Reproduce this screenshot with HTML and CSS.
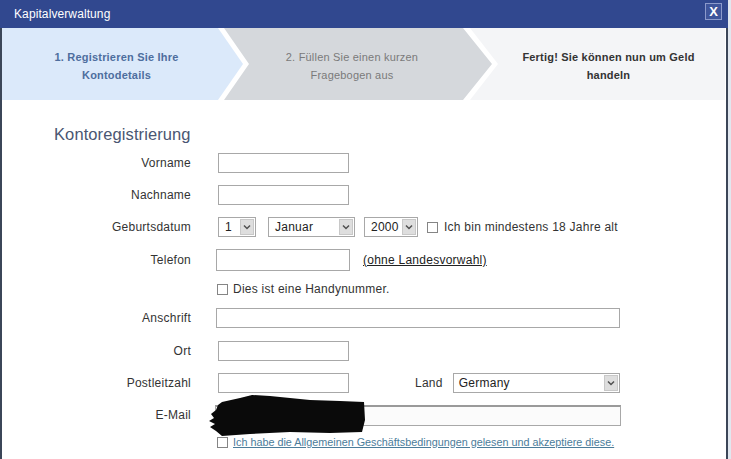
FILE: index.html
```html
<!DOCTYPE html>
<html>
<head>
  <title>Kapitalverwaltung</title>
  <link rel="stylesheet" href="styles.css">
</head>
<body>
  <div class="dialog">
    <div class="titlebar">
      <span class="title">Kapitalverwaltung</span>
      <span class="close">X</span>
    </div>

    <div class="panel">
      <div class="steps">
        <div class="step step-active">1. Registrieren Sie Ihre<br>Kontodetails</div>
        <div class="step step-next">2. Füllen Sie einen kurzen<br>Fragebogen aus</div>
        <div class="step step-done">Fertig! Sie können nun um Geld<br>handeln</div>
      </div>

      <form class="form">
        <h2>Kontoregistrierung</h2>

        <div class="row">
          <label>Vorname</label>
          <input class="field" type="text">
        </div>

        <div class="row">
          <label>Nachname</label>
          <input class="field" type="text">
        </div>

        <div class="row">
          <label>Geburtsdatum</label>
          <div class="select select-day"><span>1</span><i class="arrow"><svg width="8" height="6" viewBox="0 0 8 6"><path d="M1 1.5 L4 4.5 L7 1.5" fill="none" stroke="#505050" stroke-width="1.5"/></svg></i></div>
          <div class="select select-month"><span>Januar</span><i class="arrow"><svg width="8" height="6" viewBox="0 0 8 6"><path d="M1 1.5 L4 4.5 L7 1.5" fill="none" stroke="#505050" stroke-width="1.5"/></svg></i></div>
          <div class="select select-year"><span>2000</span><i class="arrow"><svg width="8" height="6" viewBox="0 0 8 6"><path d="M1 1.5 L4 4.5 L7 1.5" fill="none" stroke="#505050" stroke-width="1.5"/></svg></i></div>
          <span class="box box-age"></span>
          <span class="check-text">Ich bin mindestens 18 Jahre alt</span>
        </div>

        <div class="row row-tel">
          <label class="tight">Telefon</label>
          <input class="field field-tel" type="text">
          <a class="hint" href="#">(ohne Landesvorwahl)</a>
        </div>

        <div class="row row-check">
          <span class="box"></span>
          <span class="check-text">Dies ist eine Handynummer.</span>
        </div>

        <div class="row row-address">
          <label class="tight">Anschrift</label>
          <input class="field field-wide" type="text">
        </div>

        <div class="row">
          <label>Ort</label>
          <input class="field" type="text">
        </div>

        <div class="row">
          <label>Postleitzahl</label>
          <input class="field" type="text">
          <span class="land">Land</span>
          <div class="select select-country"><span>Germany</span><i class="arrow"><svg width="8" height="6" viewBox="0 0 8 6"><path d="M1 1.5 L4 4.5 L7 1.5" fill="none" stroke="#505050" stroke-width="1.5"/></svg></i></div>
        </div>

        <div class="row row-mail">
          <label class="tighter">E-Mail</label>
          <input class="field field-mail" type="text">
          <svg class="redact" width="160" height="44" viewBox="0 0 160 44">
            <path d="M14 8 L32 4 L44 1 L62 2 L82 4 L102 6 L132 7 L156 8 L157 26 L154 38 L122 39 L82 38 L42 40 L14 42 L8 37 L2 33 L7 30 L1 27 L6 24 L3 20 L8 16 L10 11 Z" fill="#0a0a0a"/>
          </svg>
        </div>

        <div class="row row-terms">
          <span class="box"></span>
          <a class="terms" href="#">Ich habe die Allgemeinen Geschäftsbedingungen gelesen und akzeptiere diese.</a>
        </div>
      </form>
    </div>
  </div>
</body>
</html>
```

FILE: styles.css
```css
body {
  margin: 0;
  padding: 0;
  background-color: #e1e7ef;
  font-family: "Liberation Sans", Arial, sans-serif;
  font-size: 12px;
  letter-spacing: 0.25px;
  color: #333;
}

.dialog {
  width: 728px;
  height: 459px;
  overflow: hidden;
}

.titlebar {
  display: flex;
  justify-content: space-between;
  align-items: flex-start;
  height: 28px;
  background-color: #31488f;
  color: white;
  padding: 0 6px 0 14px;
  box-sizing: border-box;
  letter-spacing: 0.1px;
}

.title {
  line-height: 28px;
  font-size: 12px;
}

.close {
  margin-top: 3px;
  width: 17px;
  height: 17px;
  box-sizing: border-box;
  border: 1px solid #8c9acb;
  background-color: #3f559b;
  font-weight: bold;
  font-size: 13px;
  line-height: 15px;
  text-align: center;
  letter-spacing: 0;
}

.panel {
  height: 431px;
  background-color: white;
  border-left: 2px solid #3b4658;
  border-right: 2px solid #3b4658;
}

/* Schritte */

.steps {
  display: flex;
  height: 72px;
  background-color: white;
}

.step {
  display: flex;
  align-items: center;
  justify-content: center;
  text-align: center;
  font-size: 11px;
  line-height: 18px;
  letter-spacing: 0.2px;
  padding-top: 3px;
  box-sizing: border-box;
  flex-shrink: 0;
}

.step-active {
  width: 243px;
  padding-right: 14px;
  background-color: #dbe9fa;
  color: #4e6e9e;
  font-weight: bold;
  clip-path: polygon(0 0, 216px 0, 241px 50%, 216px 100%, 0 100%);
}

.step-next {
  width: 268px;
  margin-left: -21px;
  padding-right: 12px;
  background-color: #d5d8dc;
  color: #7a7a7a;
  clip-path: polygon(0 0, 239px 0, 268px 50%, 239px 100%, 0 100%, 25px 50%);
}

.step-done {
  width: 255px;
  margin-left: -22px;
  padding-left: 22px;
  background-color: #f4f5f7;
  color: #333;
  font-weight: bold;
  clip-path: polygon(0 0, 100% 0, 100% 100%, 0 100%, 28px 50%);
}

/* Formular */

.form h2 {
  margin: 0;
  padding: 24px 0 3px 52px;
  font-size: 16.5px;
  line-height: 20px;
  font-weight: normal;
  letter-spacing: 0.1px;
  color: #4a5672;
}

.row {
  display: flex;
  align-items: center;
  height: 32px;
  position: relative;
}

.row label {
  width: 189px;
  flex-shrink: 0;
  text-align: right;
  margin-right: 27px;
}

.row label.tight {
  margin-right: 25px;
}

.row label.tighter {
  margin-right: 24px;
}

.field {
  width: 131px;
  height: 20px;
  box-sizing: border-box;
  border: 1px solid #a8a8a8;
  background-color: white;
  margin: 0;
  padding: 0 4px;
  font-family: inherit;
}

.row-tel {
  height: 34px;
}

.field-tel {
  width: 134px;
  height: 22px;
}

.hint {
  margin-left: 13px;
  color: #222;
  text-decoration: underline;
}

.row-check {
  height: 24px;
  padding-left: 215px;
}

.row-address {
  height: 34px;
}

.field-wide {
  width: 404px;
}

.row-mail .field-mail {
  width: 406px;
  height: 21px;
  border-top: 2px solid #9a9a9a;
  background-color: #fbfbfb;
}

.redact {
  position: absolute;
  left: 206px;
  top: -5px;
}

.row-terms {
  height: 22px;
  padding-left: 215px;
}

.terms {
  margin-left: 5px;
  font-size: 10.8px;
  letter-spacing: 0;
  color: #4b7c9a;
  text-decoration: underline;
}

/* Auswahl */

.select {
  display: flex;
  align-items: stretch;
  height: 20px;
  box-sizing: border-box;
  border: 1px solid #a8a8a8;
  background-color: white;
  flex-shrink: 0;
}

.select span {
  flex: 1;
  padding-left: 6px;
  line-height: 18px;
  font-size: 12px;
  color: #222;
}

.arrow {
  display: flex;
  align-items: center;
  justify-content: center;
  width: 14px;
  margin: 1px;
  background-color: #dedede;
  border: 1px solid #c8c8c8;
  box-sizing: border-box;
}

.select-day {
  width: 38px;
}

.select-month {
  width: 87px;
  margin-left: 12px;
}

.select-year {
  width: 54px;
  margin-left: 9px;
}

.select-country {
  width: 167px;
  margin-left: 10px;
}

.select-country span {
  padding-left: 5px;
}

.land {
  margin-left: 66px;
}

/* Kontrollkästchen */

.box {
  display: inline-block;
  width: 11px;
  height: 11px;
  box-sizing: border-box;
  border: 1px solid #858585;
  background-color: white;
  flex-shrink: 0;
}

.box-age {
  margin-left: 9px;
}

.check-text {
  margin-left: 6px;
}

.row-check .check-text {
  margin-left: 5px;
}
```
